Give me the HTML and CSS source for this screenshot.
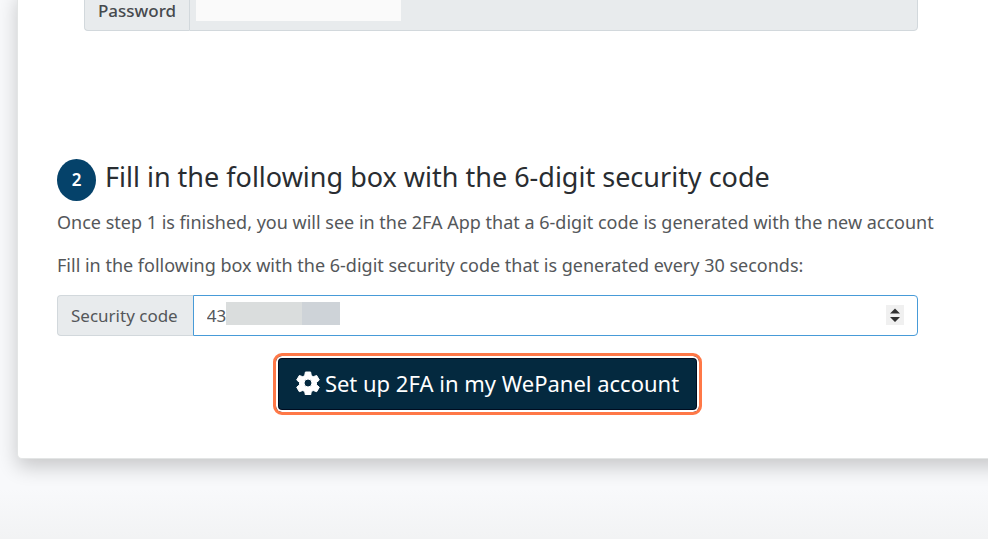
FILE: index.html
```html
<!DOCTYPE html>
<html lang="en">
<head>
<meta charset="utf-8">
<title>Set up 2FA</title>
<link rel="stylesheet" href="styles.css">
</head>
<body>
<main class="card">
  <div class="group account">
    <label class="addon strong" for="password">Password</label>
    <div class="field readonly">
      <input class="input" id="password" type="text" readonly>
      <span class="mask mask-light"></span>
    </div>
  </div>
  <section class="step">
    <h2 class="title"><span class="badge">2</span>Fill in the following box with the 6-digit security code</h2>
    <p class="text first">Once step 1 is finished, you will see in the 2FA App that a 6-digit code is generated with the new account</p>
    <p class="text">Fill in the following box with the 6-digit security code that is generated every 30 seconds:</p>
    <form class="form">
      <div class="group">
        <label class="addon wide" for="code">Security code</label>
        <div class="field active">
          <input class="input" id="code" type="number" value="43">
          <span class="mask mask-code"></span>
          <svg class="spin" viewBox="0 0 18 20" aria-hidden="true"><path d="M4 8.500 9 3.500l5 5zM4 12h10l-5 5z"/></svg>
        </div>
      </div>
      <div class="actions">
        <button class="submit" type="button">
          <svg class="gear" viewBox="0 0 24 24" aria-hidden="true"><path fill-rule="evenodd" stroke="#fff" stroke-linejoin="round" d="M9.400 1h5.200l.7 3.600 1.900 1.100 3.500-1.200 2.600 4.500-2.800 2.400v2.400l2.800 2.400-2.600 4.500-3.500-1.200-1.900 1.100-.7 3.400H9.400l-.7-3.400-1.900-1.100-3.500 1.200-2.600-4.500 2.800-2.400v-2.400L.7 9l2.600-4.500 3.500 1.200 1.900-1.100zM12 8a4 4 0 1 0 0 8 4 4 0 0 0 0-8z"/></svg>
          Set up 2FA in my WePanel account
        </button>
      </div>
    </form>
  </section>
</main>
</body>
</html>
```
FILE: styles.css
```css
* { box-sizing: border-box; }

body {
  margin: 0;
  min-height: 100vh;
  overflow: hidden;
  background: linear-gradient(#f8f9fb calc(100% - 50px), #f2f3f4);
  color: #54575a;
  font: 17px/26px "Noto Sans", sans-serif;
}

.card {
  margin: 0 -20px 0 17px;
  padding: 0 40px 43px 39px;
  background: #fff;
  border: 1px solid #e3e5e5;
  border-top: 0;
  border-radius: 0 0 5px 5px;
  box-shadow: 0 8px 20px rgba(0, 0, 0, .2);
}

.group {
  display: flex;
  height: 41px;
}

.addon {
  display: flex;
  align-items: center;
  padding: 0 13px;
  background: #e8ebed;
  border: 1px solid #d2d8dc;
  border-right: 0;
  border-radius: 4px 0 0 4px;
}

.wide { padding-right: 15px; }

.strong { color: #46494d; font-weight: 500; }

.field {
  position: relative;
  flex: 1;
  border: 1px solid #d2d8dc;
  border-radius: 0 4px 4px 0;
}

.readonly { background: #e8ebed; }
.active { border-color: #489bd8; }

.input {
  width: 100%;
  height: 100%;
  padding: 0 13px;
  border: 0;
  outline: 0;
  background: none;
  color: inherit;
  font: inherit;
  appearance: textfield;
}

.input::-webkit-inner-spin-button { display: none; }

.mask { position: absolute; }

.mask-light {
  top: 0;
  left: 6px;
  width: 205px;
  height: 30px;
  background: #fafafa;
}

.mask-code {
  top: 6px;
  left: 32px;
  width: 114px;
  height: 23px;
  background: linear-gradient(90deg, #dadddd 76px, #ced3d8 76px);
}

.spin {
  position: absolute;
  top: 9px;
  right: 13px;
  width: 18px;
  height: 20px;
  background: #f0f0f0;
  fill: #303030;
}

.account { margin: -10px 49px 0 27px; }

.step { padding-top: 128px; }

.title {
  display: flex;
  gap: 9px;
  margin: 0 0 8px;
  color: #292d31;
  font-size: 27px;
  font-weight: 400;
  line-height: 36px;
  white-space: nowrap;
}

.badge {
  width: 39px;
  height: 42px;
  border-radius: 50%;
  background: #05426a;
  color: #fff;
  font-size: 17px;
  font-weight: 600;
  line-height: 42px;
  text-align: center;
}

.text {
  margin: 0 0 17px;
  font-size: 18px;
  white-space: nowrap;
}

.form { margin-right: 49px; }

.actions {
  display: flex;
  justify-content: center;
  margin-top: 17px;
}

.submit {
  display: flex;
  align-items: center;
  gap: 5px;
  height: 62px;
  padding: 0 20px 2px;
  border: 3px solid #ff7847;
  border-radius: 9px;
  box-shadow: inset 0 0 0 2px #fff, inset 0 0 0 3px #000c20;
  background: #04293f;
  color: #fff;
  font: 400 22px/28px "Noto Sans", sans-serif;
  white-space: nowrap;
}

.gear { width: 24px; height: 24px; fill: #fff; }
```
